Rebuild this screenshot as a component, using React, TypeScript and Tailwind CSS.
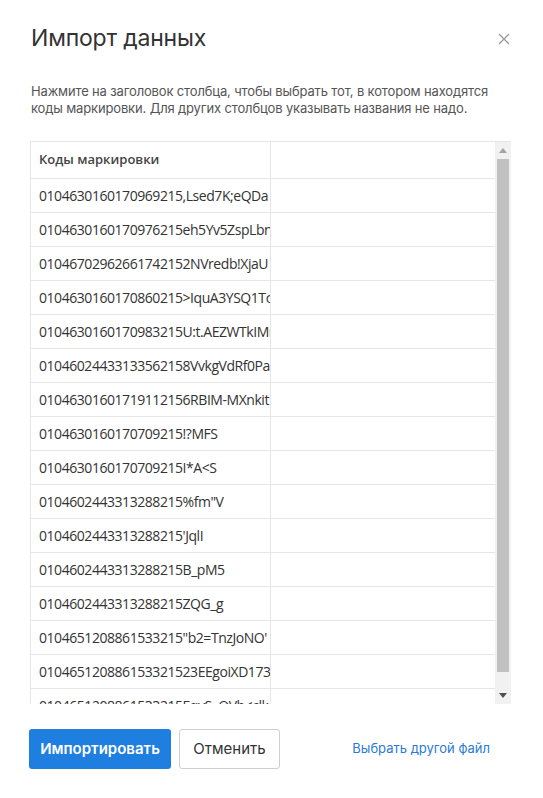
import React from 'react';

const codes: string[] = [
  '0104630160170969215,Lsed7K;eQDa',
  '0104630160170976215eh5Yv5ZspLbnQ',
  '01046702962661742152NVredb!XjaU',
  '0104630160170860215>IquA3YSQ1Tc',
  '0104630160170983215U:t.AEZWTkIMr',
  '01046024433133562158VvkgVdRf0Pa',
  '01046301601719112156RBIM-MXnkit',
  '0104630160170709215!?MFS',
  '0104630160170709215I*A<S',
  '0104602443313288215%fm"V',
  "0104602443313288215'JqlI",
  '0104602443313288215B_pM5',
  '0104602443313288215ZQG_g',
  "0104651208861533215\"b2=TnzJoNO'",
  '010465120886153321523EEgoiXD173',
  '0104651208861533215EqvS..OVb<clk',
];

const ImportDialog: React.FC = () => {
  return (
    <div className="w-[543px] h-[798px] bg-white font-['Inter',sans-serif] overflow-hidden">
      {/* Header */}
      <div className="flex items-start justify-between pl-[31px] pr-[33px] pt-[24px]">
        <h1 className="text-[23px] leading-[28px] font-normal text-[#333] tracking-[-0.2px]">Импорт данных</h1>
        <button className="mt-[9px] text-[#9a9a9a]">
          <svg width="12" height="12" viewBox="0 0 12 12" fill="none" stroke="currentColor" strokeWidth="1.3">
            <path d="M1 1L11 11M11 1L1 11" />
          </svg>
        </button>
      </div>

      {/* Description */}
      <p className="mt-[31px] pl-[31px] pr-[30px] text-[13px] leading-[17px] tracking-[-0.15px] text-[#555]">
        Нажмите на заголовок столбца, чтобы выбрать тот, в котором находятся коды маркировки. Для других столбцов указывать названия не надо.
      </p>

      {/* Table */}
      <div className="mt-[24px] ml-[30px] w-[481px] h-[563px] flex border-t border-l border-[#e6e6e6] font-['Open_Sans',sans-serif] text-[#333]">
        <div className="flex-1 overflow-hidden">
          <div className="flex h-[37px] border-b border-[#e6e6e6]">
            <div className="w-[240px] border-r border-[#e6e6e6] px-[8px] flex items-center text-[13px] font-semibold text-[#444]">
              Коды маркировки
            </div>
            <div className="flex-1" />
          </div>
          {codes.map((code, i) => (
            <div key={i} className="flex h-[34px] border-b border-[#e6e6e6]">
              <div className="w-[240px] border-r border-[#e6e6e6] pl-[8px] flex items-center overflow-hidden whitespace-nowrap text-[14px] tracking-[-0.45px]">
                {code}
              </div>
              <div className="flex-1" />
            </div>
          ))}
        </div>

        {/* Scrollbar */}
        <div className="w-[16px] bg-[#f1f1f1] flex flex-col">
          <div className="h-[17px] flex items-center justify-center">
            <svg width="8" height="5" viewBox="0 0 8 5">
              <path d="M0 5L4 0L8 5Z" fill="#a3a3a3" />
            </svg>
          </div>
          <div className="h-[513px] mx-[2px] bg-[#c1c1c1]" />
          <div className="flex-1" />
          <div className="h-[17px] flex items-center justify-center">
            <svg width="8" height="5" viewBox="0 0 8 5">
              <path d="M0 0L8 0L4 5Z" fill="#505050" />
            </svg>
          </div>
        </div>
      </div>

      {/* Footer */}
      <div className="mt-[25px] pl-[29px] pr-[53px] flex items-center">
        <button className="h-[40px] w-[142px] rounded-[3px] bg-[#1f7fe0] text-white text-[15px] font-semibold">
          Импортировать
        </button>
        <button className="ml-[8px] h-[40px] w-[101px] rounded-[3px] border border-[#cfcfcf] bg-white text-[#333] text-[15px]">
          Отменить
        </button>
        <a className="ml-auto text-[13px] text-[#2b7bd6] cursor-pointer">Выбрать другой файл</a>
      </div>
    </div>
  );
};

export default function App() {
  return <ImportDialog />;
}
